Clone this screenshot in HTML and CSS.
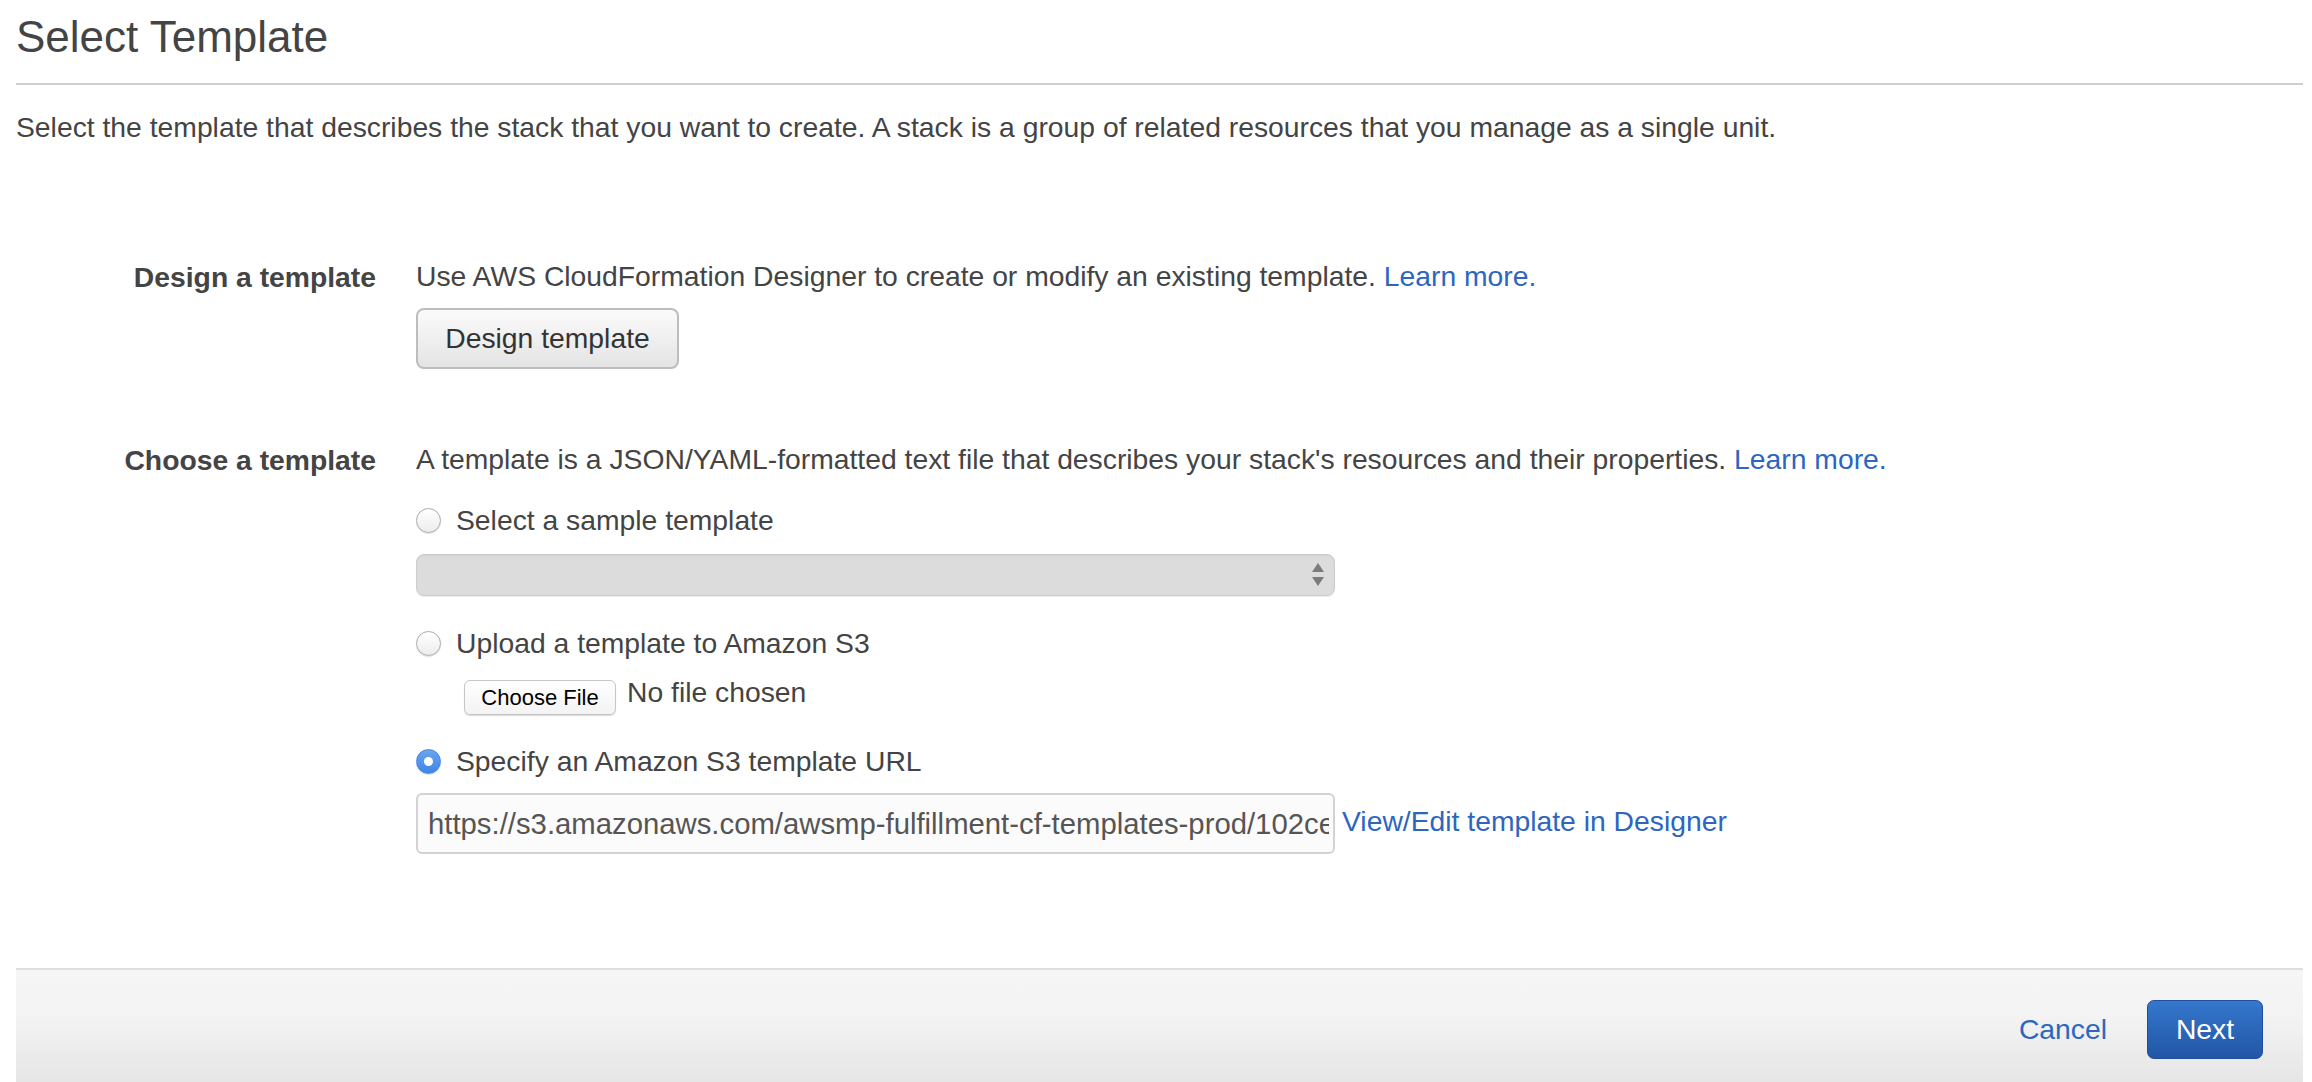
FILE: index.html
```html
<!DOCTYPE html>
<html>
<head>
<meta charset="utf-8">
<title>Select Template</title>
<link rel="stylesheet" href="styles.css">
</head>
<body>
<div class="page">
  <h1 class="title">Select Template</h1>
  <p class="intro">Select the template that describes the stack that you want to create. A stack is a group of related resources that you manage as a single unit.</p>

  <div class="form">
    <div class="label">Design a template</div>
    <div class="field">
      <div class="line">Use AWS CloudFormation Designer to create or modify an existing template. <a class="link" href="#">Learn more.</a></div>
      <button class="btn">Design template</button>
    </div>

    <div class="label label-choose">Choose a template</div>
    <div class="field field-choose">
      <div class="line">A template is a JSON/YAML-formatted text file that describes your stack's resources and their properties. <a class="link" href="#">Learn more.</a></div>

      <div class="radio-row r1"><span class="radio"></span><span>Select a sample template</span></div>
      <div class="select">
        <svg class="arrows" width="14" height="26" viewBox="0 0 14 26"><polygon points="7,1 13,10 1,10" fill="#7b7b7b"/><polygon points="1,15 13,15 7,24" fill="#7b7b7b"/></svg>
      </div>

      <div class="radio-row r2"><span class="radio"></span><span>Upload a template to Amazon S3</span></div>
      <div class="file-row">
        <button class="file-btn">Choose File</button>
        <span class="file-text">No file chosen</span>
      </div>

      <div class="radio-row r3"><span class="radio checked"></span><span>Specify an Amazon S3 template URL</span></div>
      <div class="url-row">
        <input class="url" type="text" value="https://s3.amazonaws.com/awsmp-fulfillment-cf-templates-prod/102ce">
        <a class="link view-link" href="#">View/Edit template in Designer</a>
      </div>
    </div>
  </div>

  <div class="footer">
    <a class="link cancel" href="#">Cancel</a>
    <button class="next">Next</button>
  </div>
</div>
</body>
</html>
```

FILE: styles.css
```css
* { box-sizing: border-box; }
html, body {
  margin: 0;
  padding: 0;
  background: #fff;
  overflow: hidden;
}
body {
  font-family: "Liberation Sans", Arial, Helvetica, sans-serif;
  color: #444;
  font-size: 28.3px;
}
.page {
  padding: 0 9px 0 16px;
}
.title {
  margin: 12px 0 0 0;
  font-size: 44px;
  font-weight: normal;
  line-height: 50px;
  color: #444;
  padding-bottom: 21px;
  border-bottom: 2px solid #cfcfcf;
}
.intro {
  margin: 22px 0 0 0;
  line-height: 40px;
}
.form {
  margin-top: 109px;
  display: grid;
  grid-template-columns: 360px 1fr;
  column-gap: 40px;
  row-gap: 70px;
}
.label {
  text-align: right;
  font-weight: bold;
  line-height: 40px;
  padding-top: 1px;
  color: #444;
}
.line { line-height: 40px; }
.link {
  color: #2c66bf;
  text-decoration: none;
}
.field { display: flex; flex-direction: column; align-items: flex-start; }
.btn {
  margin-top: 12px;
  width: 263px;
  height: 61px;
  font-family: inherit;
  font-size: 28.3px;
  color: #333;
  background: linear-gradient(#fbfbfb, #e4e4e4);
  border: 2px solid #bdbdbd;
  border-radius: 8px;
  padding: 0;
}
.radio-row {
  display: flex;
  align-items: center;
  gap: 15px;
  line-height: 40px;
}
.r1 { margin-top: 21px; }
.r2 { margin-top: 27px; }
.r3 { margin-top: 29px; }
.radio {
  width: 25px;
  height: 25px;
  border-radius: 50%;
  border: 1px solid #ababab;
  background: linear-gradient(#ffffff, #ececec);
  box-shadow: 0 1px 1px rgba(0,0,0,0.12);
  position: relative;
  flex: none;
}
.radio.checked {
  border: 1px solid #4387e6;
  background: linear-gradient(#69a5f0, #3f86e4);
}
.radio.checked::after {
  content: "";
  position: absolute;
  width: 9px;
  height: 9px;
  left: 7px;
  top: 7px;
  border-radius: 50%;
  background: #fff;
}
.select {
  margin-top: 14px;
  width: 919px;
  height: 42px;
  background: #dcdcdc;
  border: 1px solid #cdcdcd;
  border-radius: 8px;
  box-shadow: inset 0 1px 1px rgba(0,0,0,0.05), 0 1px 1px rgba(0,0,0,0.08);
  display: flex;
  justify-content: flex-end;
  align-items: center;
  padding-right: 9px;
}
.file-row {
  margin-top: 9px;
  margin-left: 48px;
  height: 40px;
  display: flex;
  align-items: flex-start;
}
.file-btn {
  margin-top: 8px;
  width: 152px;
  height: 35px;
  font-family: inherit;
  font-size: 22px;
  color: #000;
  background: linear-gradient(#ffffff, #f3f3f3);
  border: 1px solid #c6c6c6;
  border-radius: 6px;
  box-shadow: 0 1px 1px rgba(0,0,0,0.15);
  padding: 0;
}
.file-text {
  margin-left: 11px;
  line-height: 40px;
}
.url-row {
  margin-top: 12px;
  display: flex;
  align-items: center;
  gap: 7px;
}
.url {
  width: 919px;
  height: 61px;
  font-family: inherit;
  font-size: 29.3px;
  color: #555;
  background: #fbfbfb;
  border: 2px solid #d3d3d3;
  border-radius: 6px;
  padding: 0 4px 0 10px;
  outline: none;
}
.view-link { line-height: 40px; margin-top: -6px; }
.footer {
  margin-top: 114px;
  height: 114px;
  border-top: 2px solid #dedede;
  background: linear-gradient(#f6f6f6, #f3f3f3 40%, #e6e6e6);
  display: flex;
  justify-content: flex-end;
  align-items: flex-start;
  padding: 30px 40px 0 0;
  gap: 40px;
}
.cancel { line-height: 59px; }
.next {
  width: 116px;
  height: 59px;
  font-family: inherit;
  font-size: 28.3px;
  color: #fff;
  background: linear-gradient(#3477cc, #2256a6);
  border: 1px solid #1f4f98;
  border-radius: 7px;
  padding: 0;
}
```
